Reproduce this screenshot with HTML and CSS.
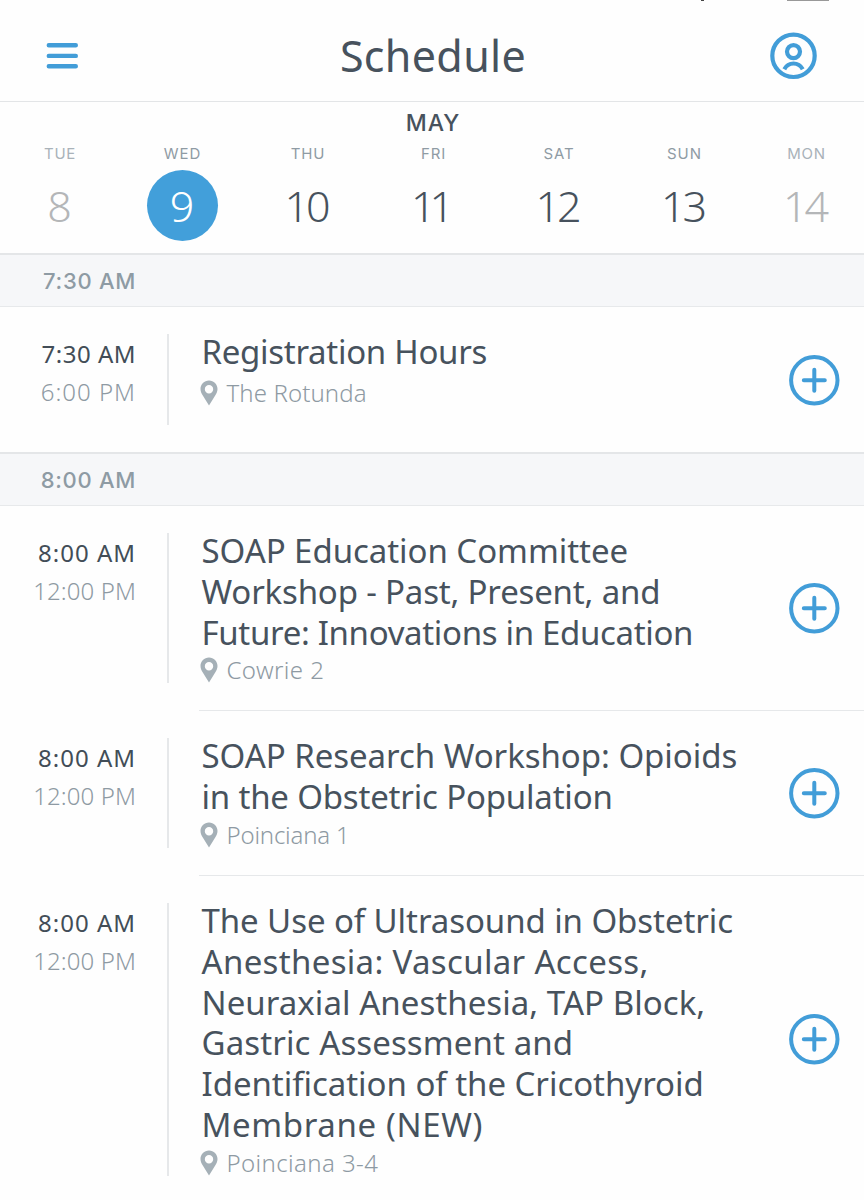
FILE: index.html
```html
<!DOCTYPE html>
<html lang="en">
<head>
<meta charset="utf-8">
<title>Schedule</title>
<link rel="stylesheet" href="styles.css">
</head>
<body>
<svg class="defs" width="0" height="0" aria-hidden="true">
  <symbol id="pin" viewBox="0 0 18 26"><path fill-rule="evenodd" d="M9 .5C4.200.5.5 4.200.5 9c0 2.400 1 4.500 2.300 6.600L9 25.500l6.200-9.900C16.500 13.500 17.500 11.400 17.500 9 17.500 4.200 13.800.5 9 .5zM9 5a4.200 4.200 0 1 0 0 8.400A4.200 4.200 0 0 0 9 5z"/></symbol>
  <symbol id="add" viewBox="0 0 52 52"><g fill="none" stroke="currentColor" stroke-width="4" stroke-linecap="round"><circle cx="26.300" cy="26.300" r="23.200"/><path d="M26.300 15.800v21M15.800 26.300h21"/></g></symbol>
</svg>
<main class="screen">
  <header class="topbar">
    <svg class="menu" viewBox="0 0 32 28"><path d="M2.800 3.300h27M2.800 13.900h27M2.800 24.200h27"/></svg>
    <h1 class="heading">Schedule</h1>
    <svg class="profile" viewBox="0 0 48 48"><circle cx="23.500" cy="23.800" r="21.200"/><circle cx="23.500" cy="19.600" r="6.500"/><path d="M14.300 37.200c2-3.700 5-5.700 9.200-5.700s7.200 2 9.200 5.700"/></svg>
    <span class="status-clip"></span><span class="status-tick"></span>
  </header>
  <section class="calendar">
    <div class="month">MAY</div>
    <div class="days">
      <div class="day muted"><span class="name">TUE</span><span class="num">8</span></div>
      <div class="day selected"><span class="name">WED</span><span class="num">9</span></div>
      <div class="day"><span class="name">THU</span><span class="num">10</span></div>
      <div class="day"><span class="name">FRI</span><span class="num ones">11</span></div>
      <div class="day"><span class="name">SAT</span><span class="num">12</span></div>
      <div class="day"><span class="name">SUN</span><span class="num">13</span></div>
      <div class="day muted"><span class="name">MON</span><span class="num">14</span></div>
    </div>
  </section>

  <div class="band">7:30 AM</div>
  <article class="event single">
    <div class="times"><div class="start">7:30 AM</div><div class="end wide">6:00 PM</div></div>
    <div class="info"><h2 class="title"><span class="l1">Registration Hours</span></h2><div class="place"><svg class="pin"><use href="#pin"/></svg><span>The Rotunda</span></div></div>
    <svg class="add"><use href="#add"/></svg>
  </article>

  <div class="band">8:00 AM</div>
  <article class="event">
    <div class="times"><div class="start wide">8:00 AM</div><div class="end">12:00 PM</div></div>
    <div class="info"><h2 class="title"><span class="l2">SOAP Education Committee</span><span class="l3">Workshop - Past, Present, and</span><span class="l4">Future: Innovations in Education</span></h2><div class="place"><svg class="pin"><use href="#pin"/></svg><span class="loose">Cowrie 2</span></div></div>
    <svg class="add"><use href="#add"/></svg>
  </article>
  <hr class="rule">
  <article class="event">
    <div class="times"><div class="start wide">8:00 AM</div><div class="end">12:00 PM</div></div>
    <div class="info"><h2 class="title"><span class="l5">SOAP Research Workshop: Opioids</span><span class="l6">in the Obstetric Population</span></h2><div class="place"><svg class="pin"><use href="#pin"/></svg><span class="tight">Poinciana 1</span></div></div>
    <svg class="add"><use href="#add"/></svg>
  </article>
  <hr class="rule">
  <article class="event">
    <div class="times"><div class="start wide">8:00 AM</div><div class="end">12:00 PM</div></div>
    <div class="info"><h2 class="title"><span class="l7">The Use of Ultrasound in Obstetric</span><span class="l8">Anesthesia: Vascular Access,</span><span class="l9">Neuraxial Anesthesia, TAP Block,</span><span class="l10">Gastric Assessment and</span><span class="l11">Identification of the Cricothyroid</span><span class="l12">Membrane (NEW)</span></h2><div class="place"><svg class="pin"><use href="#pin"/></svg><span class="loose">Poinciana 3-4</span></div></div>
    <svg class="add"><use href="#add"/></svg>
  </article>
</main>
</body>
</html>
```

FILE: styles.css
```css
* { box-sizing: border-box; }
body { margin: 0; background: #fefefe; font-family: "Noto Sans", "Open Sans", sans-serif; color: #47525d; overflow: hidden; }
.defs { position: absolute; }
.screen { width: 864px; height: 1200px; overflow: hidden; background: #fefefe; }

.topbar { position: relative; height: 102px; border-bottom: 1px solid #e3e5e7; display: flex; align-items: center; justify-content: space-between; padding: 10px 46px 0; }
.menu { width: 32px; height: 28px; fill: none; stroke: #429dd8; stroke-width: 4.400; stroke-linecap: round; }
.heading { margin: 0; font-size: 43px; line-height: 60px; font-weight: 400; letter-spacing: .35px; padding-left: 18px; }
.profile { width: 48px; height: 48px; fill: none; stroke: #429dd8; stroke-width: 4.200; }
.status-clip { position: absolute; left: 787px; top: 0; width: 42px; height: 1px; background: #999; }
.status-tick { position: absolute; left: 701px; top: 0; width: 3px; height: 1px; background: #444; }

.calendar { height: 151px; padding-top: 7px; }
.month { text-align: center; font: 500 23px/28px Inter, sans-serif; letter-spacing: .9px; height: 37px; padding-left: 2px; }
.days { display: grid; grid-template-columns: 120px 125px 126px 125px 126px 125px 119px; }
.day { display: flex; flex-direction: column; align-items: center; gap: 8px; }
.name { font: 400 15px/16px Inter, sans-serif; letter-spacing: .7px; color: #8f9ba4; }
.day:not(.muted) .name { letter-spacing: .9px; }
.num { width: 71px; height: 71px; border-radius: 50%; font: 400 43px/71px Lato, sans-serif; font-weight: 300; font-family: "Noto Sans", sans-serif; text-align: center; letter-spacing: -3px; text-indent: -4px; }
.num.ones { letter-spacing: -6px; text-indent: -8px; }
.muted .name { color: #a9b2b9; }
.muted .num { color: #b4b6b8; }
.selected .num { background: #429fda; color: #fff; }

.band { height: 54px; border-top: 2px solid #e4e6e8; border-bottom: 1px solid #e7e9eb; background: #f6f7f9; padding-right: 728px; text-align: right; white-space: nowrap; font: 500 22px/53px Inter, sans-serif; letter-spacing: .7px; color: #8e9ba4; }

.event { display: flex; padding: 27px 24px 27px 0; }
.times { width: 169px; padding-right: 31px; border-right: 2px solid #e6e8ea; text-align: right; white-space: nowrap; font-size: 24px; line-height: 38px; }
.start { padding-top: 1px; font-weight: 400; letter-spacing: .5px; color: #424d57; }
.end { font-weight: 300; letter-spacing: .1px; color: #8e9aa3; }
.times .wide { letter-spacing: 1px; }
.info { flex: 1; padding-left: 32.500px; }
.title { margin: -2px 0 0; font-weight: 400; font-size: 33px; line-height: 40.800px; }
.title span { display: block; white-space: nowrap; }
.l1 { letter-spacing: -.29px; }
.l2 { letter-spacing: -.05px; }
.l3 { letter-spacing: -.18px; }
.l4 { letter-spacing: -.33px; }
.l5 { letter-spacing: -.04px; }
.l6 { letter-spacing: -.19px; }
.l7 { letter-spacing: -.08px; }
.l8 { letter-spacing: .33px; }
.l9 { letter-spacing: .05px; }
.l10 { letter-spacing: .11px; }
.l11 { letter-spacing: -.04px; }
.l12 { letter-spacing: .64px; }
.place { display: flex; align-items: center; gap: 9px; height: 30px; margin: 2px 0 -2px -2px; font-size: 24px; font-weight: 300; line-height: 30px; letter-spacing: .1px; color: #8e9aa3; }
.loose { letter-spacing: .4px; }
.tight { letter-spacing: -.2px; }
.pin { width: 18px; height: 26px; fill: #a5b0b7; }
.add { flex: none; align-self: center; width: 52px; height: 52px; color: #429dd8; }
.single { height: 145px; }
.single .place { margin-top: 5px; }
.rule { margin: 0 0 0 199px; border: 0; height: 1px; background: #e6e8ea; }
```
